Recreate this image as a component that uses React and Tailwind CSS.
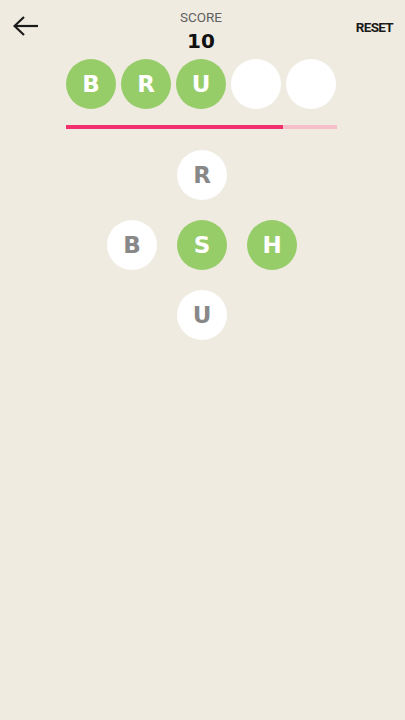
import React from "react";

const F = { fontFamily: '"DejaVu Sans", Roboto, sans-serif' };

function Circle({ letter, green }) {
  return (
    <div
      className={`w-[50px] h-[50px] rounded-full flex items-center justify-center text-[23px] font-bold ${
        green ? "bg-[#96cd69] text-white" : "bg-white text-[#888888]"
      }`}
      style={F}
    >
      {letter}
    </div>
  );
}

export default function App() {
  return (
    <div className="w-[405px] h-[720px] bg-[#efebe0] flex flex-col" style={{ fontFamily: 'Roboto, "Liberation Sans", sans-serif' }}>
      <div className="relative h-[54px]">
        <div className="absolute left-[13px] top-[15px]">
          <svg width="26" height="22" viewBox="0 0 26 22" fill="none" stroke="#1a1a1a" strokeWidth="2.2">
            <path d="M1.5 11 H25" />
            <path d="M11 2 L1.5 11 L11 20" />
          </svg>
        </div>
        <div className="absolute right-[12px] top-[19px] text-[13.5px] leading-[16px] font-bold text-[#1a1a1a] tracking-[-0.7px]">RESET</div>
        <div className="flex flex-col items-center pt-[9px] -ml-[3px]">
          <div className="text-[13.5px] leading-[16px] text-[#5f5f5f]">SCORE</div>
          <div className="text-[20px] leading-[22px] font-bold text-[#111] mt-[5px]" style={F}>10</div>
        </div>
      </div>
      <div className="flex justify-center gap-[5px] mt-[5px] -ml-[3px]">
        <Circle letter="B" green />
        <Circle letter="R" green />
        <Circle letter="U" green />
        <Circle />
        <Circle />
      </div>
      <div className="mt-[16px] ml-[66px] w-[271px] h-[4px] bg-[#f5c0c9] flex">
        <div className="h-full w-[217px] bg-[#f2306d]" />
      </div>
      <div className="mt-[21px] ml-[107px] grid grid-cols-3 gap-[20px] w-[190px]">
        <div />
        <Circle letter="R" />
        <div />
        <Circle letter="B" />
        <Circle letter="S" green />
        <Circle letter="H" green />
        <div />
        <Circle letter="U" />
        <div />
      </div>
    </div>
  );
}
